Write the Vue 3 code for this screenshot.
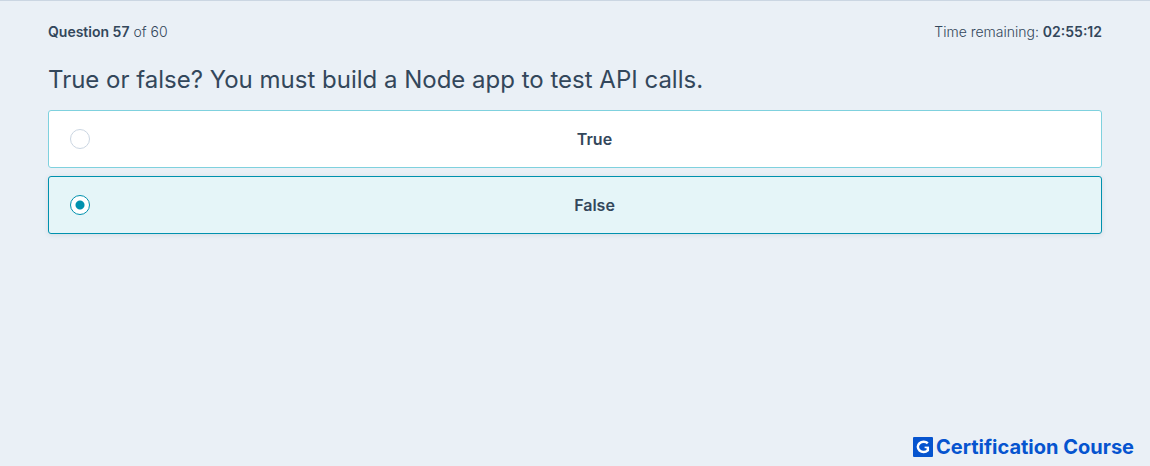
<template>
  <div class="exam">
    <main class="exam-main">
      <header class="exam-header">
        <div><strong>Question {{ current }}</strong> of {{ total }}</div>
        <div>Time remaining: <strong>{{ timeRemaining }}</strong></div>
      </header>
      <fieldset class="question">
        <legend class="question-title">{{ question }}</legend>
        <div class="answers">
          <label
            v-for="answer in answers"
            :key="answer"
            class="answer"
            :class="{ 'answer-selected': answer === selected }"
          >
            <input v-model="selected" type="radio" name="answer" class="answer-radio" :value="answer" />
            <span class="answer-label">{{ answer }}</span>
          </label>
        </div>
      </fieldset>
    </main>
    <footer class="brand">
      <svg class="brand-logo" viewBox="0 0 20 20" aria-hidden="true">
        <rect width="20" height="20" rx="1" fill="#0654cf" />
        <path
          d="M14.8 6.3A5.8 5.1 0 1 0 14.8 13.4V10.2"
          fill="none"
          stroke="#fff"
          stroke-width="2.5"
        />
        <path d="M11.6 9.6H16V11.2H11.6Z" fill="#fff" />
      </svg>
      <span>Certification Course</span>
    </footer>
  </div>
</template>

<script setup>
import { ref } from 'vue'

const current = 57
const total = 60
const timeRemaining = '02:55:12'
const question = 'True or false? You must build a Node app to test API calls.'
const answers = ['True', 'False']
const selected = ref('False')
</script>

<style>
body {
  margin: 0;
  background: #eaf0f6;
}
</style>

<style scoped>
.exam {
  display: flex;
  flex-direction: column;
  box-sizing: border-box;
  min-height: 100vh;
  border-top: 1px solid #cbd6e2;
  color: #33475b;
  font-family: Inter, "Open Sans", sans-serif;
}

.exam-main {
  padding: 19px 48px;
}

.exam-header {
  display: flex;
  justify-content: space-between;
  font-size: 14px;
  font-weight: 300;
  line-height: 24px;
}

.exam-header strong {
  font-weight: 600;
}

.question {
  min-width: 0;
  margin: 0;
  padding: 0;
  border: 0;
}

.question-title {
  padding: 17px 0 12px;
  font-size: 24px;
  font-weight: 400;
  line-height: 37px;
}

.answers {
  display: flex;
  flex-direction: column;
  gap: 8px;
}

.answer {
  display: flex;
  align-items: center;
  box-sizing: border-box;
  min-height: 58px;
  padding: 16px 2px 16px 21px;
  border: 1px solid #7fd1de;
  border-radius: 3px;
  background: #fff;
  cursor: pointer;
}

.answer-selected {
  border-color: #0091ae;
  background: #e5f5f8;
  box-shadow: 0 1px 5px rgba(45, 62, 80, 0.12);
}

.answer-radio {
  flex: none;
  width: 20px;
  height: 20px;
  margin: 0;
  border: 1px solid #cbd6e2;
  border-radius: 50%;
  background: #fff;
  appearance: none;
}

.answer-radio:checked {
  border-color: #0091ae;
  background: radial-gradient(circle, #0091ae 4px, #fff 5px);
}

.answer-label {
  flex: 1;
  font-size: 16px;
  font-weight: 600;
  line-height: 24px;
  text-align: center;
}

.brand {
  display: flex;
  align-items: center;
  justify-content: flex-end;
  gap: 3px;
  margin-top: auto;
  padding: 0 16px 7px;
  color: #0654cf;
  font-size: 20px;
  font-weight: 700;
  line-height: 24px;
}

.brand-logo {
  width: 20px;
  height: 20px;
}
</style>
